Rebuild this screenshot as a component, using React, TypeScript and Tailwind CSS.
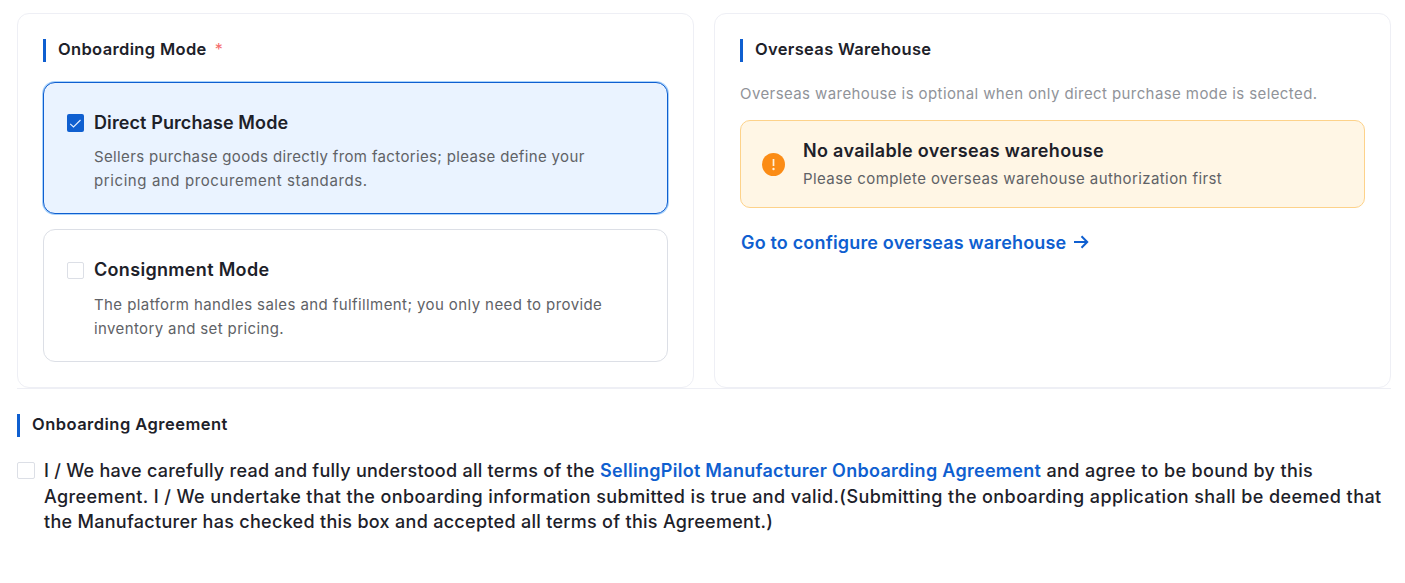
import type { ReactNode } from "react";

function SectionTitle({ children }: { children: ReactNode }) {
  return (
    <h2 className="flex h-[23px] items-center border-l-3 border-[#0f5fd0] pb-0.5 pl-3 text-[16.5px] leading-[21px] font-semibold whitespace-nowrap text-[#1d2129]">
      {children}
    </h2>
  );
}

function Checkbox({ checked = false }: { checked?: boolean }) {
  return checked ? (
    <span className="flex h-[18px] w-[17px] shrink-0 items-center justify-center rounded-[2px] bg-[#0f5fd0]">
      <svg viewBox="0 0 17 18" className="h-[18px] w-[17px]" fill="none" stroke="#e6f0ff" strokeWidth="1.1">
        <path d="M3.2 9.8 6.5 13 13.5 6" />
      </svg>
    </span>
  ) : (
    <span className="block h-[17px] w-full rounded-[2px] border border-[#dcdfe6] bg-white" />
  );
}

export default function App() {
  return (
    <main className="h-[583px] w-[1405px] overflow-hidden bg-white pt-[13px] pr-[14px] pl-[17px] font-['Inter',sans-serif] text-[#1d2129]">
      <div className="grid h-[375px] grid-cols-2 gap-5">
        <section className="rounded-xl border border-[#eeeff5] p-[25px]">
          <SectionTitle>
            <span className="tracking-[0.35px]">Onboarding Mode</span>
            <span className="ml-2 text-[16px] font-normal text-[#f56c6c]">*</span>
          </SectionTitle>
          <div className="mt-5 flex h-[132px] rounded-xl border border-[#0f5fd0] bg-[#eaf3ff] pt-[26px] pl-[23px] shadow-[0_0_0_1px_#a9d2fb]">
            <div className="w-[17px] shrink-0 pt-[5px]"><Checkbox checked /></div>
            <div className="ml-[10px] whitespace-nowrap">
              <h3 className="text-[18px] leading-[28px] font-semibold tracking-[0.1px]">Direct Purchase Mode</h3>
              <p className="mt-2 text-[15px] leading-6 text-[#606266]">
                <span className="tracking-[0.35px]">Sellers purchase goods directly from factories; please define your</span><br />
                <span className="tracking-[0.59px]">pricing and procurement standards.</span>
              </p>
            </div>
          </div>
          <div className="mt-[15px] flex h-[133px] rounded-xl border border-[#dcdfe6] pt-[26px] pl-[23px]">
            <div className="w-[17px] shrink-0 pt-[6px]"><Checkbox /></div>
            <div className="ml-[10px] whitespace-nowrap">
              <h3 className="text-[18px] leading-[28px] font-semibold tracking-[0.32px]">Consignment Mode</h3>
              <p className="mt-[9px] text-[15px] leading-6 text-[#606266]">
                <span className="tracking-[0.41px]">The platform handles sales and fulfillment; you only need to provide</span><br />
                <span className="tracking-[0.38px]">inventory and set pricing.</span>
              </p>
            </div>
          </div>
        </section>

        <section className="rounded-xl border border-[#eeeff5] p-[25px]">
          <SectionTitle><span className="tracking-[0.33px]">Overseas Warehouse</span></SectionTitle>
          <p className="mt-5 text-[15px] leading-6 tracking-[0.41px] whitespace-nowrap text-[#909399]">
            Overseas warehouse is optional when only direct purchase mode is selected.
          </p>
          <div className="mt-[14px] flex h-[88px] items-center rounded-[10px] border border-[#fdd28a] bg-[#fff6e5] pl-[21px]">
            <svg viewBox="0 0 23 23" className="h-[23px] w-[23px]">
              <circle cx="11.5" cy="11.5" r="11.5" fill="#fb8c16" />
              <path d="M11.5 6v7" stroke="#fff2dd" strokeWidth="1.7" />
              <circle cx="11.5" cy="16" r="1.2" fill="#fff2dd" />
            </svg>
            <div className="ml-[18px] whitespace-nowrap">
              <h3 className="text-[18px] leading-[28px] font-semibold tracking-[0.31px]">No available overseas warehouse</h3>
              <p className="mt-0.5 text-[15px] leading-6 tracking-[0.41px] text-[#606266]">Please complete overseas warehouse authorization first</p>
            </div>
          </div>
          <a className="mt-5 flex h-7 items-center pl-px text-[18px] font-semibold whitespace-nowrap text-[#0f5fd0]">
            <span className="tracking-[0.17px]">Go to configure overseas warehouse</span>
            <svg viewBox="0 0 16 16" className="ml-[7px] h-4 w-4" fill="none" stroke="currentColor" strokeWidth="2">
              <path d="M1 8h13M8.5 2.3 14.2 8l-5.7 5.7" />
            </svg>
          </a>
        </section>
      </div>

      <section className="border-t border-[#eeeff5] pt-[25px]">
        <SectionTitle><span className="tracking-[0.47px]">Onboarding Agreement</span></SectionTitle>
        <div className="mt-[21px] flex">
          <div className="w-[18px] shrink-0 pt-1"><Checkbox /></div>
          <p className="ml-[9px] text-[18px] leading-[25.5px] font-medium whitespace-nowrap">
            <span className="tracking-[0.26px]">I / We have carefully read and fully understood all terms of the </span>
            <a className="font-semibold tracking-[0.29px] text-[#0f5fd0]">SellingPilot Manufacturer Onboarding Agreement</a>
            <span className="tracking-[0.38px]"> and agree to be bound by this</span><br />
            <span className="tracking-[0.41px]">Agreement. I / We undertake that the onboarding information submitted is true and valid.(Submitting the onboarding application shall be deemed that</span><br />
            <span className="tracking-[0.29px]">the Manufacturer has checked this box and accepted all terms of this Agreement.)</span>
          </p>
        </div>
      </section>
    </main>
  );
}
